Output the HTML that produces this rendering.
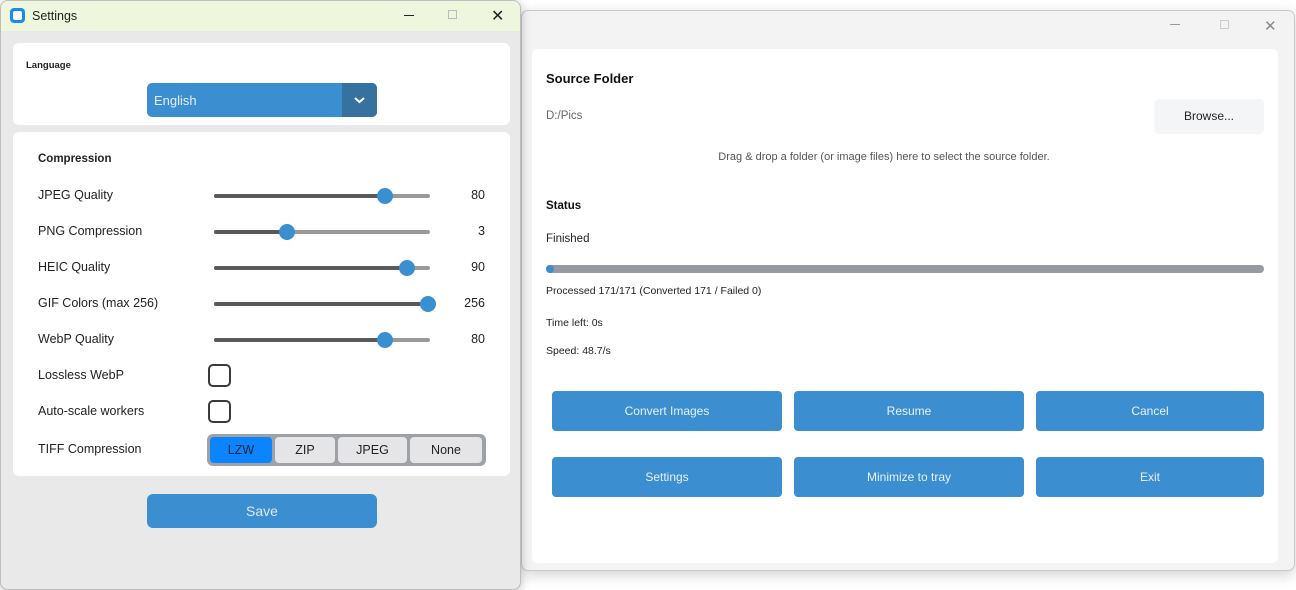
<!DOCTYPE html>
<html><head><meta charset="utf-8"><style>
*{box-sizing:border-box;margin:0;padding:0}
body{width:1296px;height:590px;overflow:hidden;background:#fff;font-family:"Liberation Sans",sans-serif;position:relative;font-size:12px;color:#222}
.abs{position:absolute}
#bg2{left:521px;top:10px;width:774px;height:561px;background:#f3f3f3;border:1px solid #c8c8c8;border-radius:7px;box-shadow:0 4px 14px rgba(0,0,0,.18)}
#card2{left:532px;top:49px;width:746px;height:514px;background:#fff;border-radius:6px}
.bb{position:absolute;background:#3b8ed0;border-radius:4px;color:#e8f1fa;font-size:12px;text-align:center;line-height:40px;height:40px;width:230px}
#w1{left:0;top:0;width:521px;height:590px;background:#e9e9e9;border:1px solid #bdbdbd;border-radius:8px;overflow:hidden;box-shadow:0 2px 10px rgba(0,0,0,.25)}
#tb{left:0;top:0;width:521px;height:30px;background:#eef6dd}
.card{position:absolute;background:#fff;border-radius:6px;left:12px;width:497px}
.lbl{position:absolute;left:37px;font-size:12.5px;color:#222}
.tr{position:absolute;left:213px;width:216px;height:4px;border-radius:2px;background:#9a9a9a}
.tf{position:absolute;left:0;top:0;height:4px;border-radius:2px;background:#5a5a5a}
.th{position:absolute;top:-6px;width:16px;height:16px;border-radius:50%;background:#3b8ed0}
.val{position:absolute;right:35px;font-size:12.5px;text-align:right}
.cb{position:absolute;left:207px;width:23px;height:23px;border:2.5px solid #3b3b3b;border-radius:5px}
.seg{position:absolute;top:3px;height:26px;background:#e5e5e8;border-radius:4px;text-align:center;line-height:26px;font-size:12.5px}
</style></head><body>
<div id="bg2" class="abs"></div>
<div class="abs" style="left:1170px;top:24px;width:10px;height:1px;background:#999"></div>
<div class="abs" style="left:1220px;top:20px;width:9px;height:9px;border:1px solid #ccc"></div>
<div class="abs" style="left:1264px;top:17px;font-size:15px;color:#888">✕</div>
<div id="card2" class="abs"></div>
<div class="abs" style="left:546px;top:71px;font-size:13px;font-weight:bold;color:#111">Source Folder</div>
<div class="abs" style="left:546px;top:110px;font-size:11.5px;color:#666">D:/Pics</div>
<div class="abs" style="left:1154px;top:99px;width:110px;height:35px;background:#f4f5f6;border-radius:5px;text-align:center;line-height:35px;font-size:12px">Browse...</div>
<div class="abs" style="left:546px;top:151px;width:676px;text-align:center;font-size:11px;color:#555">Drag &amp; drop a folder (or image files) here to select the source folder.</div>
<div class="abs" style="left:546px;top:200px;font-size:11.5px;font-weight:bold;color:#111">Status</div>
<div class="abs" style="left:546px;top:233px;font-size:11.5px">Finished</div>
<div class="abs" style="left:546px;top:265px;width:718px;height:8px;background:#979aa0;border-radius:4px"><div style="width:8px;height:8px;border-radius:4px;background:#3b8ed0"></div></div>
<div class="abs" style="left:546px;top:285px;font-size:10.5px">Processed 171/171 (Converted 171 / Failed 0)</div>
<div class="abs" style="left:546px;top:317px;font-size:10.5px">Time left: 0s</div>
<div class="abs" style="left:546px;top:345px;font-size:10.5px">Speed: 48.7/s</div>
<div class="bb" style="left:552px;top:391px">Convert Images</div>
<div class="bb" style="left:794px;top:391px">Resume</div>
<div class="bb" style="left:1036px;top:391px;width:228px">Cancel</div>
<div class="bb" style="left:552px;top:457px">Settings</div>
<div class="bb" style="left:794px;top:457px">Minimize to tray</div>
<div class="bb" style="left:1036px;top:457px;width:228px">Exit</div>

<div id="w1" class="abs">
<div id="tb" class="abs"></div>
<div class="abs" style="left:9px;top:7px;width:15px;height:15px;border-radius:4px;background:#1a8cf0"><div style="margin:3px;width:9px;height:9px;background:#fff;border-radius:2px"></div></div>
<div class="abs" style="left:31px;top:8px;font-size:12.5px">Settings</div>
<div class="abs" style="left:403px;top:14px;width:10px;height:1px;background:#222"></div>
<div class="abs" style="left:447px;top:9px;width:9px;height:9px;border:1px solid #bbb"></div>
<div class="abs" style="left:490px;top:5px;font-size:16px">✕</div>
<div class="card" style="top:42px;height:82px"></div>
<div class="abs" style="left:25px;top:59px;font-size:9.5px;font-weight:bold">Language</div>
<div class="abs" style="left:146px;top:82px;width:230px;height:34px;background:#3b8ed0;border-radius:5px;overflow:hidden">
<div style="position:absolute;left:7px;top:10px;color:#e6f0fa;font-size:13px">English</div>
<div style="position:absolute;right:0;top:0;width:35px;height:34px;background:#36719f"></div>
<svg style="position:absolute;right:12px;top:14px" width="11" height="7"><path d="M1 1l4.5 4 4.5-4" stroke="#fff" stroke-width="2" fill="none"/></svg>
</div>
<div class="card" style="top:131px;height:344px"></div>
<div class="abs" style="left:37px;top:152px;font-size:11.5px;font-weight:bold">Compression</div>
<div class="lbl" style="top:187px">JPEG Quality</div>
<div class="tr" style="top:193px"><div class="tf" style="width:171px"></div><div class="th" style="left:163px"></div></div><div class="val" style="top:187px">80</div>
<div class="lbl" style="top:223px">PNG Compression</div>
<div class="tr" style="top:229px"><div class="tf" style="width:73px"></div><div class="th" style="left:65px"></div></div><div class="val" style="top:223px">3</div>
<div class="lbl" style="top:259px">HEIC Quality</div>
<div class="tr" style="top:265px"><div class="tf" style="width:193px"></div><div class="th" style="left:185px"></div></div><div class="val" style="top:259px">90</div>
<div class="lbl" style="top:295px">GIF Colors (max 256)</div>
<div class="tr" style="top:301px"><div class="tf" style="width:214px"></div><div class="th" style="left:206px"></div></div><div class="val" style="top:295px">256</div>
<div class="lbl" style="top:331px">WebP Quality</div>
<div class="tr" style="top:337px"><div class="tf" style="width:171px"></div><div class="th" style="left:163px"></div></div><div class="val" style="top:331px">80</div>
<div class="lbl" style="top:367px">Lossless WebP</div><div class="cb" style="top:363px"></div>
<div class="lbl" style="top:403px">Auto-scale workers</div><div class="cb" style="top:399px"></div>
<div class="lbl" style="top:441px">TIFF Compression</div>
<div class="abs" style="left:206px;top:433px;width:279px;height:32px;background:#9ea2a6;border-radius:6px">
<div class="seg" style="left:3px;width:62px;background:#0a84ff;color:#10233a">LZW</div>
<div class="seg" style="left:68px;width:60px">ZIP</div>
<div class="seg" style="left:131px;width:69px">JPEG</div>
<div class="seg" style="left:203px;width:72px">None</div>
</div>
<div class="abs" style="left:146px;top:493px;width:230px;height:34px;background:#3b8ed0;border-radius:6px;color:#dbe9f6;text-align:center;line-height:34px;font-size:14px">Save</div>
</div>
</body></html>
